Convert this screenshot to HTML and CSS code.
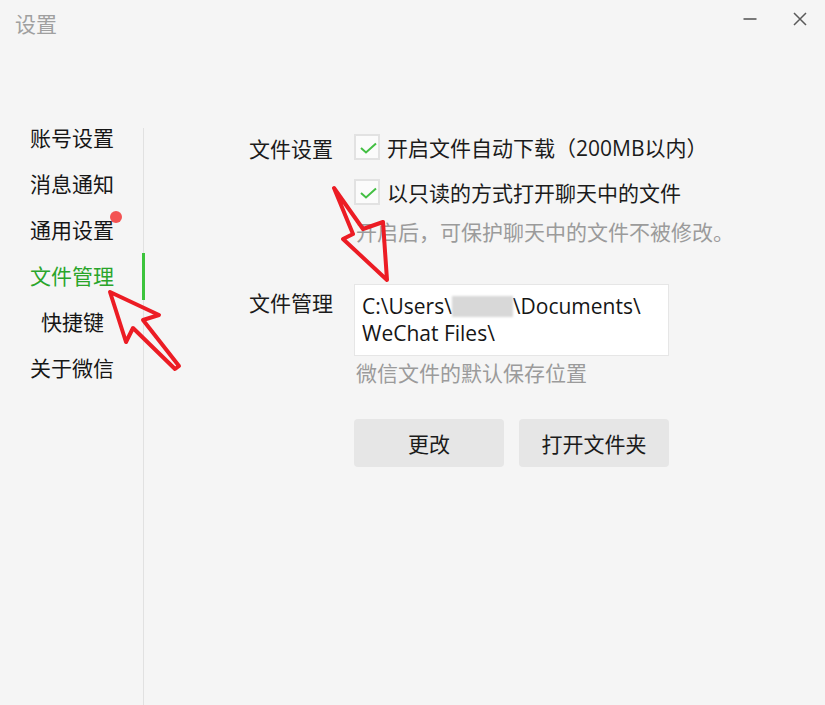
FILE: index.html
```html
<!DOCTYPE html>
<html lang="zh-CN">
<head>
<meta charset="utf-8">
<title>设置</title>
<link rel="stylesheet" href="styles.css">
</head>
<body>
<div class="window">
  <header class="titlebar">
    <span class="title">设置</span>
    <div class="controls">
      <svg class="ctl" width="14" height="14" viewBox="0 0 14 14"><line x1="0.5" y1="7" x2="13.5" y2="7" stroke="#5a5a5a" stroke-width="1.6"/></svg>
      <svg class="ctl" width="14" height="14" viewBox="0 0 14 14"><path d="M1 1 L13 13 M13 1 L1 13" stroke="#5a5a5a" stroke-width="1.5" fill="none"/></svg>
    </div>
  </header>
  <div class="main">
    <nav class="sidebar">
      <div class="nav-item">账号设置</div>
      <div class="nav-item">消息通知</div>
      <div class="nav-item"><span class="dot-wrap">通用设置</span></div>
      <div class="nav-item active">文件管理</div>
      <div class="nav-item indent">快捷键</div>
      <div class="nav-item">关于微信</div>
    </nav>
    <section class="content">
      <div class="row">
        <div class="label label-top">文件设置</div>
        <div class="field">
          <div class="check">
            <span class="box"><svg width="22" height="22" viewBox="0 0 22 22"><polyline points="5,12 10,16.5 20,7.5" fill="none" stroke="#43bf43" stroke-width="2"/></svg></span>
            <span>开启文件自动下载（200MB以内）</span>
          </div>
          <div class="check second">
            <span class="box"><svg width="22" height="22" viewBox="0 0 22 22"><polyline points="5,12 10,16.5 20,7.5" fill="none" stroke="#43bf43" stroke-width="2"/></svg></span>
            <span>以只读的方式打开聊天中的文件</span>
          </div>
          <p class="hint hint-first">开启后，可保护聊天中的文件不被修改。</p>
        </div>
      </div>
      <div class="row file-row">
        <div class="label label-file">文件管理</div>
        <div class="field">
          <div class="path">C:\Users\<span class="blur"></span>\Documents\<br>WeChat Files\</div>
          <p class="hint">微信文件的默认保存位置</p>
          <div class="buttons">
            <button class="btn">更改</button>
            <button class="btn">打开文件夹</button>
          </div>
        </div>
      </div>
    </section>
  </div>
  <svg class="annotations" width="825" height="705" viewBox="0 0 825 705">
    <polygon points="110,292 159,315 143,320 179,366 175,369 133,328 126,342" fill="none" stroke="#ec1c24" stroke-width="4" stroke-linejoin="round"/>
    <polygon points="334,188 363,229 383,222 387,280 343,239 353,234" fill="none" stroke="#ec1c24" stroke-width="4" stroke-linejoin="round"/>
  </svg>
</div>
</body>
</html>
```
FILE: styles.css
```css
* { box-sizing: border-box; }
html, body { margin: 0; padding: 0; }
body {
  background: #f5f5f5;
  font-family: "Open Sans", "Noto Sans CJK SC", sans-serif;
  color: #1b1b1b;
}
.window {
  position: relative;
  width: 825px;
  height: 705px;
  overflow: hidden;
  background: #f5f5f5;
  display: flex;
  flex-direction: column;
}
.titlebar {
  height: 128px;
  display: flex;
  align-items: flex-start;
  justify-content: space-between;
  padding: 9px 18px 0 15px;
}
.title {
  font-size: 21px;
  line-height: 30px;
  color: #a0a0a0;
}
.controls {
  display: flex;
  gap: 36px;
  padding-top: 3px;
}
.ctl { display: block; }
.main {
  flex: 1;
  display: flex;
}
.sidebar {
  width: 144px;
  border-right: 1px solid #e1e1e1;
  padding-left: 30px;
  display: flex;
  flex-direction: column;
  gap: 26px;
}
.nav-item {
  position: relative;
  font-size: 21px;
  line-height: 20px;
  color: #161616;
}
.nav-item.indent { padding-left: 11px; }
.nav-item.active { color: #2aa52a; }
.nav-item.active::after {
  content: "";
  position: absolute;
  right: -2px;
  top: -13px;
  width: 3px;
  height: 47px;
  background: #3cc43c;
}
.dot-wrap { position: relative; }
.dot-wrap::after {
  content: "";
  position: absolute;
  left: 80px;
  top: -5px;
  width: 12px;
  height: 12px;
  border-radius: 50%;
  background: #f35353;
}
.content {
  flex: 1;
  padding: 6px 0 0 105px;
}
.row { display: flex; }
.label {
  width: 105px;
  flex: none;
  font-size: 21px;
  line-height: 26px;
}
.label-top { padding-top: 2px; }
.label-file { padding-top: 5px; line-height: 28px; }
.file-row { margin-top: 39px; }
.field { display: flex; flex-direction: column; }
.check {
  display: flex;
  align-items: center;
  gap: 7px;
  height: 26px;
  font-size: 21px;
}
.check.second { margin-top: 19px; }
.box {
  width: 26px;
  height: 26px;
  border: 2px solid #e2e2e2;
  background: #fbfbfb;
  display: flex;
  align-items: center;
  justify-content: center;
}
.box svg { display: block; }
.hint {
  margin: 4px 0 0;
  padding-left: 2px;
  font-size: 21px;
  line-height: 26px;
  color: #9b9b9b;
}
.hint-first { margin-top: 14px; }
.path {
  width: 315px;
  height: 72px;
  border: 1px solid #e6e6e6;
  background: #ffffff;
  padding: 8px 7px;
  font-size: 21px;
  line-height: 27px;
  color: #161616;
  white-space: nowrap;
}
.blur {
  display: inline-block;
  width: 61px;
  height: 21px;
  vertical-align: -3px;
  background: #d8d8d8;
  filter: blur(1.2px);
}
.buttons {
  display: flex;
  gap: 15px;
  margin-top: 33px;
}
.btn {
  width: 150px;
  height: 48px;
  border: none;
  border-radius: 4px;
  background: #e6e6e6;
  font-family: "Open Sans", "Noto Sans CJK SC", sans-serif;
  font-size: 21px;
  color: #1b1b1b;
  padding: 0;
}
.annotations {
  position: absolute;
  left: 0;
  top: 0;
  pointer-events: none;
}
```
